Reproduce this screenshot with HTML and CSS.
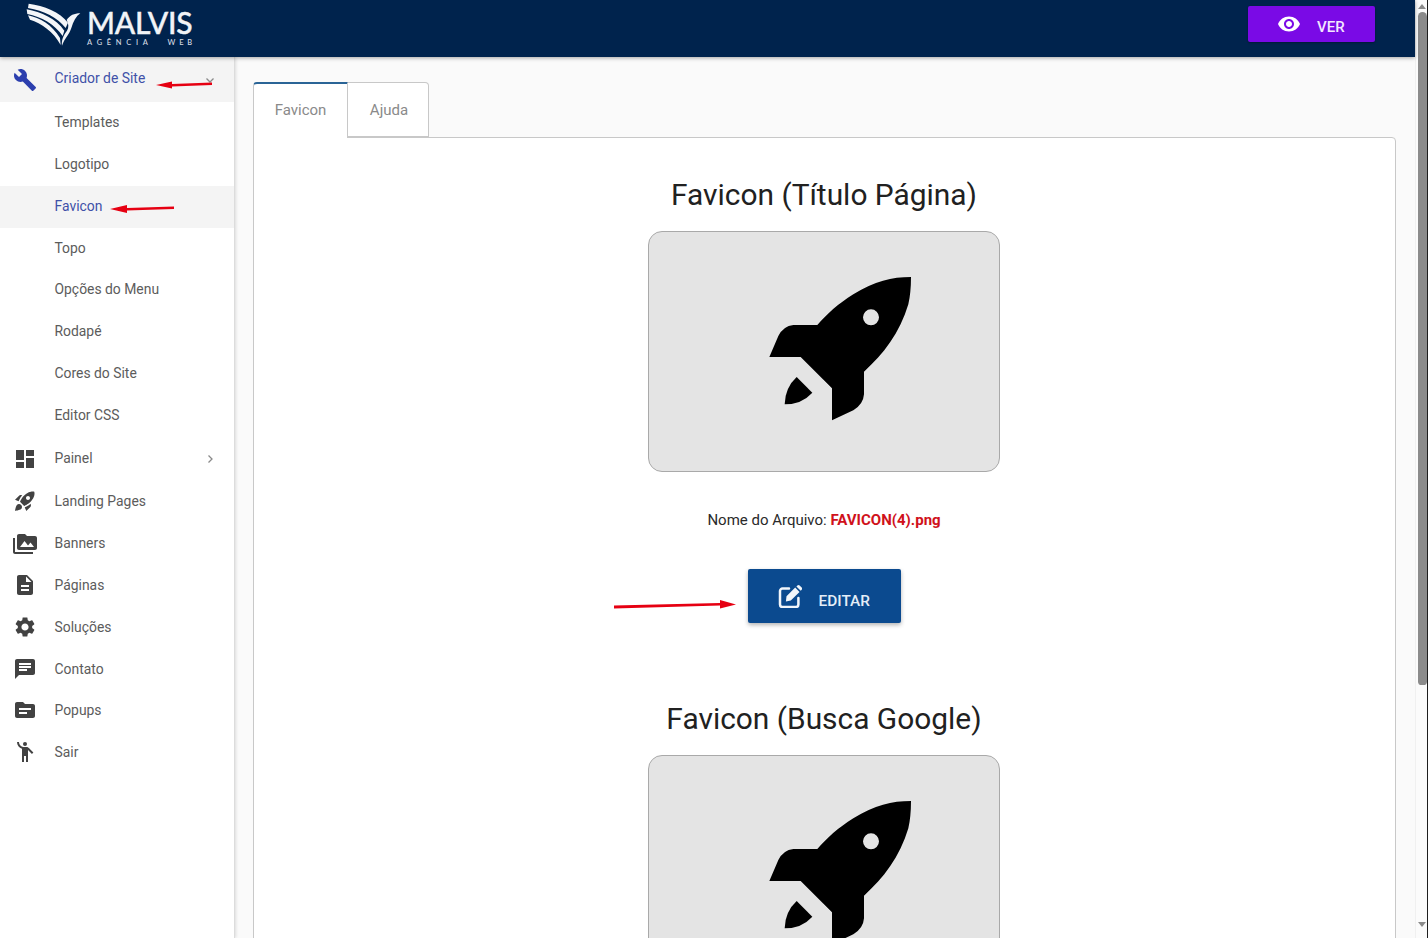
FILE: index.html
```html
<!DOCTYPE html>
<html lang="pt-BR">
<head>
<meta charset="utf-8">
<title>Favicon</title>
<link rel="stylesheet" href="styles.css">
</head>
<body>
<svg class="defs" width="0" height="0" aria-hidden="true">
  <symbol id="big-rocket" viewBox="0 0 1056 720">
    <g transform="translate(276 87)">
      <path fill-rule="evenodd" d="M513 48C455 48 405 60 340 100C295 128 262 158 232 192L160 192Q130 195 115 225L88 288L182 288L276 382L276 478L340 448Q370 430 372 400L372 332C430 280 480 215 505 130Q513 95 513 48ZM393 145A24 24 0 1 1 393 193A24 24 0 1 1 393 145Z"/>
      <path d="M170 348L217 395Q185 430 134 430Q135 380 170 348Z"/>
    </g>
  </symbol>
</svg>
<div class="app">
  <div class="page">
    <header class="topbar">
      <div class="logo">
        <svg class="wing" viewBox="0 0 180 52" aria-hidden="true">
          <g fill="#f4f6f9" transform="scale(.3333)">
            <path d="M26 11C72 17 120 36 144 68L137 84C112 52 72 32 24 24Z"/>
            <path d="M20 28C64 36 108 56 133 92L128 108C104 72 64 50 22 42Z"/>
            <path d="M24 46C60 54 96 74 120 114L122 135C100 94 64 70 30 59Z"/>
            <path d="M140 60C150 46 162 40 181 40C168 49 160 64 154 84C148 104 134 114 126 137C124 120 130 106 141 92C147 82 146 72 140 60Z"/>
          </g>
        </svg>
        <div class="logo-text">
          <span class="logo-name">MALVIS</span>
          <span class="logo-sub"><span>AGÊNCIA</span><span class="logo-web">WEB</span></span>
        </div>
      </div>
      <button class="btn btn-view" type="button">
        <svg class="btn-eye" viewBox="0 0 24 24"><path d="M12 4.500C7 4.500 2.730 7.610 1 12c1.730 4.390 6 7.500 11 7.500s9.270-3.110 11-7.500c-1.730-4.390-6-7.500-11-7.500zM12 17c-2.760 0-5-2.240-5-5s2.240-5 5-5 5 2.240 5 5-2.240 5-5 5zm0-8c-1.660 0-3 1.340-3 3s1.340 3 3 3 3-1.340 3-3-1.340-3-3-3z"/></svg>
        <span>VER</span>
      </button>
    </header>
    <div class="content">
      <nav class="sidebar">
        <a class="row row-open active"><svg class="ico" viewBox="0 0 24 24"><path d="M22.7 19l-9.1-9.1c.9-2.3.4-5-1.5-6.9-2-2-5-2.4-7.4-1.3L9 6 6 9 1.6 4.7C.4 7.1.9 10.1 2.9 12.1c1.9 1.9 4.6 2.4 6.9 1.5l9.1 9.1c.4.4 1 .4 1.4 0l2.3-2.3c.5-.4.5-1.1.1-1.4z"/></svg><span class="label">Criador de Site</span><svg class="chev" viewBox="0 0 10 10"><path d="M1.500 3.500L5 7l3.500-3.500"/></svg></a>
        <a class="row sub">Templates</a>
        <a class="row sub">Logotipo</a>
        <a class="row sub active">Favicon</a>
        <a class="row sub">Topo</a>
        <a class="row sub">Opções do Menu</a>
        <a class="row sub">Rodapé</a>
        <a class="row sub">Cores do Site</a>
        <a class="row sub">Editor CSS</a>
        <a class="row row-painel"><svg class="ico" viewBox="0 0 24 24"><path d="M3 13h8V3H3v10zm0 8h8v-6H3v6zm10 0h8V11h-8v10zm0-18v6h8V3h-8z"/></svg><span class="label">Painel</span><svg class="chev" viewBox="0 0 10 10"><path d="M3.500 1.500L7 5 3.500 8.500"/></svg></a>
        <a class="row"><svg class="ico" viewBox="0 0 24 24"><path d="M9.19 6.35c-2.04 2.29-3.44 5.58-3.57 5.89L2 10.69l4.05-4.05c.47-.47 1.15-.68 1.81-.55l1.33.26zM11.17 17s3.74-1.55 5.89-3.7c5.4-5.4 4.5-9.62 4.21-10.57-.95-.3-5.17-1.19-10.57 4.21C8.55 9.09 7 12.83 7 12.83L11.17 17zm6.48-2.19c-2.29 2.04-5.58 3.44-5.89 3.57L13.31 22l4.05-4.05c.47-.47.68-1.15.55-1.81l-.26-1.33zM9 18c0 .83-.34 1.58-.88 2.12C6.94 21.3 2 22 2 22s.7-4.94 1.88-6.12C4.42 15.34 5.17 15 6 15c1.66 0 3 1.34 3 3zm4-9c0-1.1.9-2 2-2s2 .9 2 2-.9 2-2 2-2-.9-2-2z"/></svg><span class="label">Landing Pages</span></a>
        <a class="row"><svg class="ico ico-media" viewBox="0 0 24 24"><path d="M2 6H0v5h.01L0 20c0 1.1.9 2 2 2h18v-2H2V6zm20-2h-8l-2-2H6c-1.1 0-1.99.9-1.99 2L4 16c0 1.1.9 2 2 2h16c1.1 0 2-.9 2-2V6c0-1.1-.9-2-2-2zM7 15l4.5-6 3.5 4.51 2.5-3.01L21 15H7z"/></svg><span class="label">Banners</span></a>
        <a class="row"><svg class="ico" viewBox="0 0 24 24"><path d="M14 2H6c-1.1 0-1.99.9-1.99 2L4 20c0 1.1.89 2 1.99 2H18c1.1 0 2-.9 2-2V8l-6-6zm2 16H8v-2h8v2zm0-4H8v-2h8v2zm-3-5V3.5L18.5 9H13z"/></svg><span class="label">Páginas</span></a>
        <a class="row"><svg class="ico" viewBox="0 0 24 24"><path d="M19.14 12.94c.04-.3.06-.61.06-.94 0-.32-.02-.64-.07-.94l2.03-1.58c.18-.14.23-.41.12-.61l-1.92-3.32c-.12-.22-.37-.29-.59-.22l-2.39.96c-.5-.38-1.03-.7-1.62-.94l-.36-2.54c-.04-.24-.24-.41-.48-.41h-3.84c-.24 0-.43.17-.47.41l-.36 2.54c-.59.24-1.13.57-1.62.94l-2.39-.96c-.22-.08-.47 0-.59.22L2.74 8.87c-.12.21-.08.47.12.61l2.03 1.58c-.05.3-.09.63-.09.94s.02.64.07.94l-2.03 1.58c-.18.14-.23.41-.12.61l1.92 3.32c.12.22.37.29.59.22l2.39-.96c.5.38 1.03.7 1.62.94l.36 2.54c.05.24.24.41.48.41h3.84c.24 0 .44-.17.47-.41l.36-2.54c.59-.24 1.13-.56 1.62-.94l2.39.96c.22.08.47 0 .59-.22l1.92-3.32c.12-.22.07-.47-.12-.61l-2.01-1.58zM12 15.6c-1.98 0-3.6-1.62-3.6-3.6s1.62-3.6 3.6-3.6 3.6 1.62 3.6 3.6-1.62 3.6-3.6 3.6z"/></svg><span class="label">Soluções</span></a>
        <a class="row"><svg class="ico" viewBox="0 0 24 24"><path d="M20 2H4c-1.1 0-1.99.9-1.99 2L2 22l4-4h14c1.1 0 2-.9 2-2V4c0-1.1-.9-2-2-2zM6 9h12v2H6V9zm8 5H6v-2h8v2zm4-6H6V6h12v2z"/></svg><span class="label">Contato</span></a>
        <a class="row"><svg class="ico" viewBox="0 0 24 24"><path d="M20 6h-8l-2-2H4c-1.1 0-1.99.9-1.99 2L2 18c0 1.1.9 2 2 2h16c1.1 0 2-.9 2-2V8c0-1.1-.9-2-2-2zm-6 10H6v-2h8v2zm4-4H6v-2h12v2z"/></svg><span class="label">Popups</span></a>
        <a class="row"><svg class="ico" viewBox="0 0 24 24"><circle cx="12" cy="4" r="2"/><path d="M15.89 8.11C15.5 7.72 14.83 7 13.53 7h-2.54C8.24 6.99 6 4.75 6 2H4c0 3.16 2.11 5.84 5 6.71V22h2v-6h2v6h2V10.05L18.95 14l1.41-1.41-4.47-4.48z"/></svg><span class="label">Sair</span></a>
      </nav>
      <main class="main">
        <div class="tabs">
          <div class="tab tab-on">Favicon</div>
          <div class="tab tab-off">Ajuda</div>
        </div>
        <section class="panel">
          <h2 class="title">Favicon (Título Página)</h2>
          <div class="preview"><svg class="preview-art"><use href="#big-rocket"/></svg></div>
          <p class="file">Nome do Arquivo: <strong>FAVICON(4).png</strong></p>
          <button class="btn btn-edit" type="button">
            <svg class="edit-ico" viewBox="0 0 24 24"><path class="edit-box" d="M11 4.600H4.500A2.500 2.500 0 0 0 2 7.100v13.400A2.500 2.500 0 0 0 4.500 23h13.400a2.500 2.500 0 0 0 2.500-2.500V14"/><path d="M8.500 12.300L17.200 3.600l4.300 4.300-8.700 8.700-4.900.9zM18.400 2.400l1-1a1.600 1.600 0 0 1 2.200 0l2.100 2.100a1.600 1.600 0 0 1 0 2.200l-1 1z"/></svg>
            <span>EDITAR</span>
          </button>
          <h2 class="title title-second">Favicon (Busca Google)</h2>
          <div class="preview"><svg class="preview-art"><use href="#big-rocket"/></svg></div>
        </section>
      </main>
    </div>
  </div>
  <div class="scrollbar">
    <span class="arrow arrow-up"></span>
    <span class="thumb"></span>
    <span class="arrow arrow-down"></span>
  </div>
</div>
<svg class="marks" viewBox="0 0 1428 938" aria-hidden="true">
  <path d="M212 82.500L172 84V81.500L156 85L172 88.500V86.500L212 85Z"/>
  <path d="M174 206.500L127 208V205L110 209L127 213V210.500L174 209Z"/>
  <path d="M614 605.500L720 603V600L736 604.500L720 608.500V605.500L614 608.500Z"/>
</svg>
</body>
</html>
```
FILE: styles.css
```css
* { box-sizing: border-box; }
html, body { margin: 0; height: 100%; overflow: hidden; }
body { font-family: Roboto, "Liberation Sans", sans-serif; color: #212121; background: #fff; position: relative; }
.defs { position: absolute; }

.app { display: flex; height: 938px; }
.page { flex: 1; min-width: 0; display: flex; flex-direction: column; }

.topbar {
  height: 57px; flex: none; background: #00234d;
  display: flex; justify-content: space-between; align-items: flex-start;
  padding: 0 40px 0 28px; position: relative; z-index: 2;
  box-shadow: 0 1px 4px rgba(0, 0, 0, .35);
}
.logo { display: flex; align-items: flex-start; }
.wing { width: 180px; height: 52px; margin-left: -8px; margin-right: -122px; flex: none; }
.logo-text { display: flex; flex-direction: column; margin-left: 9px; color: #fff; width: 106px; }
.logo-name { font: 500 30px/1 Lato, sans-serif; margin-top: 7px; letter-spacing: -.2px; color: #f2f4f7; -webkit-text-stroke: .4px #f2f4f7; }
.logo-sub { display: flex; justify-content: space-between; font: 500 7.500px/1 Lato, sans-serif; letter-spacing: 4.700px; color: #d6dbe3; margin-top: 2px; }
.logo-web { letter-spacing: 3.800px; margin-right: -3px; }

.btn { border: 0; display: flex; align-items: center; font-family: Roboto, sans-serif; font-weight: 500; color: #f3e6ff; border-radius: 2px; padding: 0; }
.btn-view { width: 127px; height: 36px; margin-top: 6px; background: #7a0ae6; font-size: 15px; padding-left: 29px; gap: 16px; box-shadow: 0 1px 2px rgba(0, 0, 0, .3); }
.btn-eye { width: 24px; height: 24px; fill: #fff; }
.btn-view span { padding-top: 6px; }

.content { flex: 1; display: flex; min-height: 0; }
.sidebar { width: 235px; flex: none; background: #fff; border-right: 1px solid #dcdcdc; box-shadow: 1px 0 3px rgba(0, 0, 0, .12); position: relative; z-index: 1; }
.row { display: flex; align-items: center; height: 41.800px; padding-left: 13px; font-size: 13.900px; color: #5c5c5c; }
.row-open { height: 45.400px; }
.row-open .label { margin-top: -3px; }
.row-painel { height: 43.800px; }
.row-painel .label { margin-top: -2px; }
.row.sub { padding-left: 54.500px; padding-bottom: 2px; }
.row.active { background: #f4f4f4; color: #3f51a8; }
.row.active .ico { fill: #2c3fae; }
.ico { width: 24px; height: 24px; flex: none; fill: #424242; }
.ico-media { margin-top: 1px; }
.label { margin-left: 17.500px; flex: 1; }
.chev { width: 10px; height: 10px; flex: none; margin-right: 19px; fill: none; stroke: #8a8a8a; stroke-width: 1.300; }

.main { flex: 1; min-width: 0; background: #fafafa; padding: 25px 19px 0 18px; }
.tabs { display: flex; height: 56px; position: relative; z-index: 1; margin-bottom: -1px; }
.tab { width: 81px; height: 55px; background: #fff; border: 1px solid #c8c8c8; border-left: 0; border-radius: 0 4px 0 0; font-size: 15px; color: #8a8a8a; display: flex; align-items: center; justify-content: center; }
.tab-off { padding-left: 2px; }
.tab-on { width: 95px; height: 56px; padding-bottom: 2px; border: 1px solid #c8c8c8; border-top: 2px solid #2a6496; border-bottom: 0; border-radius: 4px 0 0 0; }
.panel { background: #fff; border: 1px solid #c8c8c8; border-radius: 0 4px 0 0; height: 900px; display: flex; flex-direction: column; align-items: center; padding-right: 1px; }
.title { margin: 39px 0 0; font-size: 29.900px; font-weight: 400; line-height: 36px; color: #212121; white-space: nowrap; }
.title-second { margin-top: 78px; }
.preview { width: 352px; height: 241px; flex: none; margin-top: 18px; background: #e4e4e4; border: 1px solid #a9a9a9; border-radius: 14px; position: relative; overflow: hidden; }
.preview-art { position: absolute; left: -1px; top: 0; width: 352px; height: 240px; display: block; }
.file { margin: 39px 0 0; font-size: 15px; line-height: 18px; color: #2a2a2a; }
.file strong { color: #d0111b; font-weight: 700; }
.btn-edit { width: 153px; height: 54px; margin-top: 40px; background: #0b4a8f; font-size: 15.400px; color: #e4eef8; padding-left: 30px; gap: 17px; box-shadow: 0 2px 4px rgba(0, 0, 0, .3); flex: none; }
.edit-ico { width: 24px; height: 24px; fill: #f2f6fb; }
.edit-box { fill: none; stroke: #f2f6fb; stroke-width: 2.500; stroke-linecap: round; }
.btn-edit span { padding-top: 10px; }

.scrollbar { width: 13px; flex: none; background: #fbfbfb; border-left: 1px solid #f0f0f0; border-right: 1px solid #1e1e1e; display: flex; flex-direction: column; align-items: center; padding-top: 4px; }
.thumb { width: 9px; height: 673px; flex: none; margin-top: 3px; background: #8b8b8b; border-radius: 5px 5px 4px 4px; margin-left: 1px; }
.arrow { width: 0; height: 0; border-left: 4px solid transparent; border-right: 4px solid transparent; flex: none; margin-left: 1px; }
.arrow-up { border-bottom: 5px solid #8b8b8b; }
.arrow-down { border-top: 5px solid #8b8b8b; margin-top: 237px; }

.marks { position: absolute; left: 0; top: 0; width: 1428px; height: 938px; fill: #e60012; pointer-events: none; z-index: 5; }
```
